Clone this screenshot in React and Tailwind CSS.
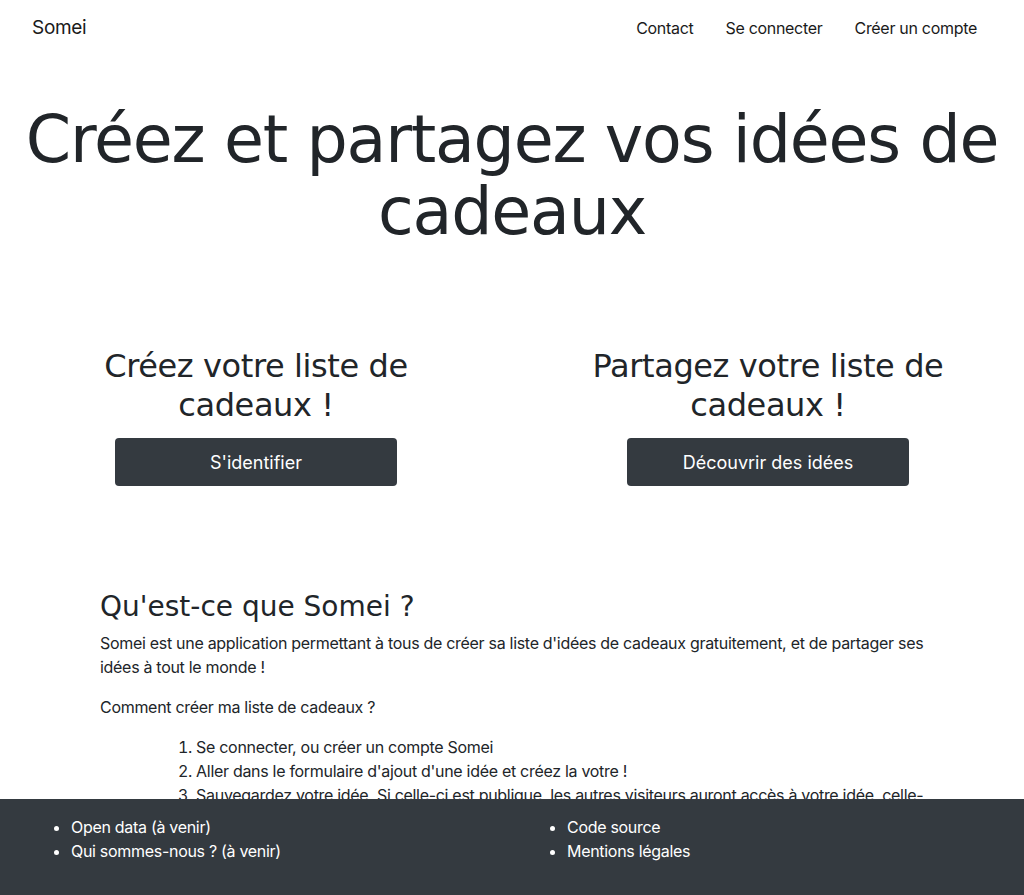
import React from "react";

const head = { fontFamily: '"DejaVu Sans", "Open Sans", sans-serif' };
const body = { fontFamily: 'Inter, "Liberation Sans", sans-serif' };

export default function App() {
  return (
    <div className="relative h-[895px] overflow-hidden bg-white text-[#212529] tracking-[-0.3px]" style={body}>
      <nav className="flex h-[56px] items-center justify-between pl-[32px] pr-[47px]">
        <a className="text-[19px] text-[#1a1a1a]">Somei</a>
        <ul className="flex items-center gap-[32px] text-[16px] text-[#1a1a1a]">
          <li>Contact</li>
          <li>Se connecter</li>
          <li>Créer un compte</li>
        </ul>
      </nav>

      <h1 className="mt-[48px] text-center text-[65px] font-normal leading-[72px] tracking-[-1.2px]" style={head}>
        Créez et partagez vos idées de cadeaux
      </h1>

      <div className="mt-[99px] grid grid-cols-2">
        <div className="flex flex-col items-center">
          <h2 className="w-[340px] text-center text-[32px] font-normal leading-[39px] tracking-[-0.4px]" style={head}>
            Créez votre liste de cadeaux !
          </h2>
          <button className="mt-[13px] h-[48px] w-[282px] rounded-[4px] bg-[#343a40] text-[18px] tracking-normal text-white">
            S'identifier
          </button>
        </div>
        <div className="flex flex-col items-center">
          <h2 className="w-[380px] text-center text-[32px] font-normal leading-[39px] tracking-[-0.4px]" style={head}>
            Partagez votre liste de cadeaux !
          </h2>
          <button className="mt-[13px] h-[48px] w-[282px] rounded-[4px] bg-[#343a40] text-[18px] tracking-normal text-white">
            Découvrir des idées
          </button>
        </div>
      </div>

      <section className="mx-auto mt-[104px] w-[824px] text-[16px] leading-[24px]">
        <h3 className="text-[28px] font-normal leading-[34px] tracking-normal" style={head}>
          Qu'est-ce que Somei ?
        </h3>
        <p className="mt-[7px]">
          Somei est une application permettant à tous de créer sa liste d'idées de cadeaux gratuitement, et de partager ses idées à tout le monde !
        </p>
        <p className="mt-[16px]">Comment créer ma liste de cadeaux ?</p>
        <ol className="mt-[16px] list-inside list-decimal pl-[78px]">
          <li>Se connecter, ou créer un compte Somei</li>
          <li>Aller dans le formulaire d'ajout d'une idée et créez la votre !</li>
          <li>
            Sauvegardez votre idée. Si celle-ci est publique, les autres visiteurs auront accès à votre idée, celle-ci apparaîtra dans la liste des idées !
          </li>
        </ol>
      </section>

      <footer className="absolute bottom-0 left-0 right-0 h-[96px] bg-[#343a40] text-[16px] leading-[24px] text-white">
        <div className="grid grid-cols-2 pt-[16px]">
          <ul className="list-disc pl-[71px]">
            <li>Open data (à venir)</li>
            <li>Qui sommes-nous ? (à venir)</li>
          </ul>
          <ul className="list-disc pl-[55px]">
            <li>Code source</li>
            <li>Mentions légales</li>
          </ul>
        </div>
      </footer>
    </div>
  );
}
